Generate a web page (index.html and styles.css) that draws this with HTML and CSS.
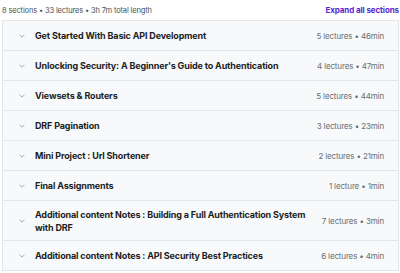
FILE: index.html
```html
<!DOCTYPE html>
<html lang="en">
<head>
    <meta charset="UTF-8">
    <title>Course content</title>
    <link rel="stylesheet" href="styles.css">
</head>
<body>
    <div class="content-header">
        <span class="summary">8 sections • 33 lectures • 3h 7m total length</span>
        <button class="expand-all">Expand all sections</button>
    </div>

    <div class="sections">
        <div class="section">
            <span class="chevron"><svg viewBox="0 0 10 6" width="6" height="4"><path d="M1 1l4 4 4-4" fill="none" stroke="currentColor" stroke-width="1.3"/></svg></span>
            <span class="title">Get Started With Basic API Development</span>
            <span class="meta">5 lectures • 46min</span>
        </div>
        <div class="section">
            <span class="chevron"><svg viewBox="0 0 10 6" width="6" height="4"><path d="M1 1l4 4 4-4" fill="none" stroke="currentColor" stroke-width="1.3"/></svg></span>
            <span class="title">Unlocking Security: A Beginner's Guide to Authentication</span>
            <span class="meta">4 lectures • 47min</span>
        </div>
        <div class="section">
            <span class="chevron"><svg viewBox="0 0 10 6" width="6" height="4"><path d="M1 1l4 4 4-4" fill="none" stroke="currentColor" stroke-width="1.3"/></svg></span>
            <span class="title">Viewsets &amp; Routers</span>
            <span class="meta">5 lectures • 44min</span>
        </div>
        <div class="section">
            <span class="chevron"><svg viewBox="0 0 10 6" width="6" height="4"><path d="M1 1l4 4 4-4" fill="none" stroke="currentColor" stroke-width="1.3"/></svg></span>
            <span class="title">DRF Pagination</span>
            <span class="meta">3 lectures • 23min</span>
        </div>
        <div class="section">
            <span class="chevron"><svg viewBox="0 0 10 6" width="6" height="4"><path d="M1 1l4 4 4-4" fill="none" stroke="currentColor" stroke-width="1.3"/></svg></span>
            <span class="title">Mini Project : Url Shortener</span>
            <span class="meta">2 lectures • 21min</span>
        </div>
        <div class="section">
            <span class="chevron"><svg viewBox="0 0 10 6" width="6" height="4"><path d="M1 1l4 4 4-4" fill="none" stroke="currentColor" stroke-width="1.3"/></svg></span>
            <span class="title">Final Assignments</span>
            <span class="meta">1 lecture • 1min</span>
        </div>
        <div class="section">
            <span class="chevron"><svg viewBox="0 0 10 6" width="6" height="4"><path d="M1 1l4 4 4-4" fill="none" stroke="currentColor" stroke-width="1.3"/></svg></span>
            <span class="title">Additional content Notes : Building a Full Authentication System with DRF</span>
            <span class="meta">7 lectures • 3min</span>
        </div>
        <div class="section">
            <span class="chevron"><svg viewBox="0 0 10 6" width="6" height="4"><path d="M1 1l4 4 4-4" fill="none" stroke="currentColor" stroke-width="1.3"/></svg></span>
            <span class="title">Additional content Notes : API Security Best Practices</span>
            <span class="meta">6 lectures • 4min</span>
        </div>
    </div>
</body>
</html>
```

FILE: styles.css
```css
body {
    font-family: Inter, "Liberation Sans", sans-serif;
    background-color: white;
    color: #1c1d1f;
    margin: 0;
    padding: 0 1px 0 2px;
}
.content-header {
    display: flex;
    justify-content: space-between;
    align-items: center;
    height: 20px;
}
.summary {
    font-size: 7.5px;
    color: #4b4f52;
    letter-spacing: -0.15px;
}
.expand-all {
    background: none;
    border: none;
    padding: 0;
    font-family: inherit;
    font-size: 8px;
    font-weight: 700;
    letter-spacing: -0.1px;
    color: #5624d0;
    cursor: pointer;
}
.sections {
    border: 1px solid #e2e6e9;
    border-bottom: none;
}
.section {
    display: flex;
    align-items: center;
    min-height: 30px;
    padding: 0 14px 0 16px;
    background-color: #f7f9fa;
    border-bottom: 1px solid #e2e6e9;
    box-sizing: border-box;
}
.section:nth-child(7) {
    min-height: 40px;
}
.chevron {
    display: flex;
    width: 16px;
    color: #8a8f93;
}
.title {
    flex: 1;
    font-size: 9px;
    font-weight: 700;
    letter-spacing: -0.15px;
    line-height: 13px;
    padding-right: 10px;
}
.meta {
    font-size: 8px;
    color: #6a6f73;
    letter-spacing: -0.15px;
    white-space: nowrap;
}
```
